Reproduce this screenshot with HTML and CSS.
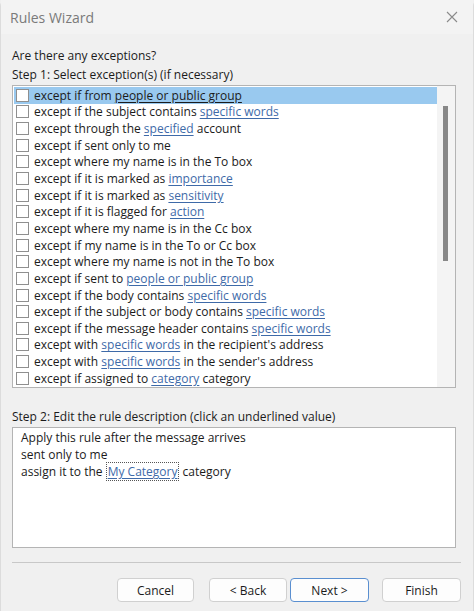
FILE: index.html
```html
<!DOCTYPE html>
<html lang="en">

<head>
    <meta charset="UTF-8">
    <meta name="viewport" content="width=device-width, initial-scale=1.0">
    <title>Rules Wizard</title>
    <link rel="stylesheet" href="styles.css">
</head>

<body>
    <div class="window">
        <div class="titlebar">
            <span class="title">Rules Wizard</span>
            <svg class="close" width="12" height="12" viewBox="0 0 12 12">
                <path d="M1 1 L11 11 M11 1 L1 11" stroke="#8a8a8a" stroke-width="1.1" fill="none" />
            </svg>
        </div>

        <div class="content">
            <div class="label">Are there any exceptions?</div>
            <div class="label">Step 1: Select exception(s) (if necessary)</div>

            <div class="listbox">
                <div class="rows" id="rows"></div>
                <div class="scrollbar">
                    <div class="thumb"></div>
                </div>
            </div>

            <div class="label step2">Step 2: Edit the rule description (click an underlined value)</div>
            <div class="desc">
                <div>Apply this rule after the message arrives</div>
                <div>sent only to me</div>
                <div>assign it to the <span class="focus-link">My Category</span> category</div>
            </div>

            <div class="separator"></div>

            <div class="buttons">
                <button class="btn cancel">Cancel</button>
                <button class="btn back">&lt; Back</button>
                <button class="btn default">Next &gt;</button>
                <button class="btn">Finish</button>
            </div>
        </div>
    </div>

    <script>
        // [text, link, rest]
        const exceptions = [
            ['except if from ', 'people or public group', ''],
            ['except if the subject contains ', 'specific words', ''],
            ['except through the ', 'specified', ' account'],
            ['except if sent only to me', '', ''],
            ['except where my name is in the To box', '', ''],
            ['except if it is marked as ', 'importance', ''],
            ['except if it is marked as ', 'sensitivity', ''],
            ['except if it is flagged for ', 'action', ''],
            ['except where my name is in the Cc box', '', ''],
            ['except if my name is in the To or Cc box', '', ''],
            ['except where my name is not in the To box', '', ''],
            ['except if sent to ', 'people or public group', ''],
            ['except if the body contains ', 'specific words', ''],
            ['except if the subject or body contains ', 'specific words', ''],
            ['except if the message header contains ', 'specific words', ''],
            ['except with ', 'specific words', ' in the recipient\'s address'],
            ['except with ', 'specific words', ' in the sender\'s address'],
            ['except if assigned to ', 'category', ' category']
        ];

        const rows = document.getElementById('rows');
        exceptions.forEach((item, i) => {
            const row = document.createElement('div');
            row.className = 'row' + (i === 0 ? ' selected' : '');
            const box = document.createElement('span');
            box.className = 'check';
            row.appendChild(box);
            const text = document.createElement('span');
            text.className = 'text';
            text.appendChild(document.createTextNode(item[0]));
            if (item[1]) {
                const link = document.createElement('span');
                link.className = 'link';
                link.textContent = item[1];
                text.appendChild(link);
            }
            if (item[2]) text.appendChild(document.createTextNode(item[2]));
            row.appendChild(text);
            rows.appendChild(row);
        });
    </script>
</body>

</html>
```

FILE: styles.css
```css
* {
    margin: 0;
    padding: 0;
    box-sizing: border-box;
}

body {
    font-family: 'Open Sans', 'Noto Sans', sans-serif;
    font-size: 12px;
    color: #1b1b1b;
    background: #f0f0f0;
    width: 474px;
    height: 611px;
    overflow: hidden;
}

.window {
    height: 611px;
    background: #f0f0f0;
    border-left: 1px solid #dcdcdc;
    border-right: 1px solid #dcdcdc;
    border-radius: 6px 6px 0 0;
    display: flex;
    flex-direction: column;
}

.titlebar {
    height: 34px;
    background: #f3f3f3;
    display: flex;
    align-items: center;
    justify-content: space-between;
    padding: 0 15px 0 9px;
}

.title {
    font-size: 14px;
    color: #7a7a7a;
}

.content {
    padding: 12px 12px 0 11px;
    display: flex;
    flex-direction: column;
}

.label {
    line-height: 19px;
}

.listbox {
    margin-top: 1px;
    width: 444px;
    height: 303px;
    background: #fff;
    border: 1px solid #b4b4b4;
    display: flex;
}

.rows {
    flex: 1;
    padding: 1px 0 0 1px;
}

.row {
    height: 16.65px;
    display: flex;
    align-items: center;
    gap: 5px;
    padding-left: 2px;
    white-space: nowrap;
}

.row.selected {
    background: #99c9ef;
}

.check {
    width: 13px;
    height: 13px;
    background: #fff;
    border: 1px solid #8f8f8f;
    flex-shrink: 0;
}

.link {
    color: #3e6aa8;
    text-decoration: underline;
    text-underline-offset: 2px;
}

.row.selected .link {
    color: #1b1b1b;
}

.scrollbar {
    width: 18px;
    background: #f4f4f4;
    padding: 20px 0 0 6px;
}

.thumb {
    width: 5px;
    height: 155px;
    background: #888;
}

.step2 {
    margin-top: 19px;
}

.desc {
    width: 444px;
    height: 121px;
    margin-top: 1px;
    background: #fff;
    border: 1px solid #b4b4b4;
    padding: 1px 0 0 8px;
    line-height: 17px;
}

.focus-link {
    color: #3e6aa8;
    text-decoration: underline;
    text-underline-offset: 2px;
    border: 1px dotted #555;
    padding: 0 1px;
}

.separator {
    width: 449px;
    height: 1px;
    background: #c8c8c8;
    margin-top: 14px;
}

.buttons {
    display: flex;
    justify-content: flex-end;
    gap: 13px;
    margin-top: 15px;
}

.btn {
    width: 79px;
    height: 24px;
    font-family: inherit;
    font-size: 12px;
    color: #1b1b1b;
    background: #fdfdfd;
    border: 1px solid #d0d0d0;
    border-radius: 4px;
}

.btn.cancel {
    width: 77px;
    margin-right: 2px;
}

.btn.back {
    width: 78px;
    margin-right: -10px;
}

.btn.default {
    border: 1px solid #5a8fd0;
}
```
